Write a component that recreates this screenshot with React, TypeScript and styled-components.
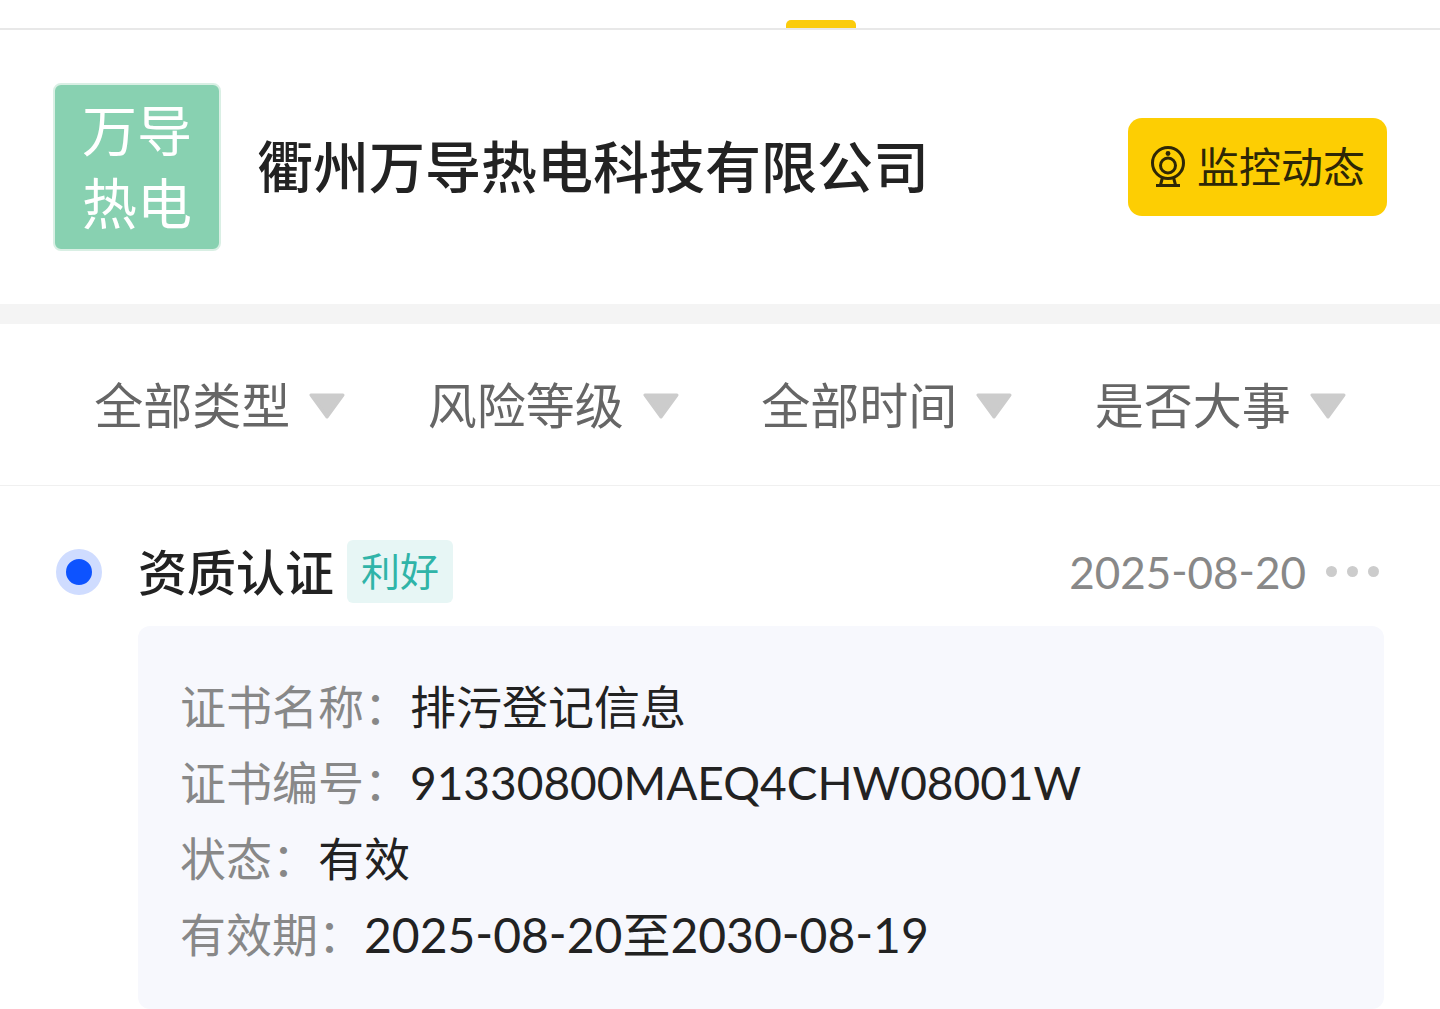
import React from "react";
import styled, { createGlobalStyle } from "styled-components";

const GlobalStyle = createGlobalStyle`
  *, *::before, *::after { box-sizing: border-box; }
  body {
    margin: 0;
    background: #fff;
    color: #222;
    font-family: Lato, "Noto Sans CJK SC", sans-serif;
  }
  h1, h2, dl, dd, dt { margin: 0; font-weight: 400; }
  button, select { font-family: inherit; border: 0; padding: 0; background: none; color: inherit; cursor: pointer; }
`;

const TabStrip = styled.nav`
  display: grid;
  grid-template-columns: 31fr 70px 23fr;
  align-items: end;
  height: 30px;
  border-bottom: 2px solid #e8e8e8;
`;

const TabIndicator = styled.span`
  grid-column: 2;
  height: 8px;
  border-radius: 5px 5px 0 0;
  background: #fbcc0c;
`;

const CompanyHeader = styled.header`
  display: flex;
  align-items: center;
  gap: 36px;
  padding: 53px;
  border-bottom: 20px solid #f4f4f4;
`;

const CompanyLogo = styled.div`
  display: grid;
  place-content: center;
  flex: none;
  width: 168px;
  height: 168px;
  border: 2px solid #d9efe4;
  border-radius: 8px;
  background: #88d1b1;
  color: #fff;
  font-size: 55px;
  line-height: 73px;
`;

const CompanyName = styled.h1`
  flex: 1;
  font-size: 56px;
  font-weight: 500;
  line-height: 80px;
`;

const MonitorButton = styled.button`
  display: flex;
  align-items: center;
  justify-content: center;
  gap: 11px;
  flex: none;
  height: 98px;
  padding: 0 22px;
  border-radius: 14px;
  background: #fdce03;
  color: #2e2706;
  font-size: 42px;
  line-height: 60px;
`;

const FilterBar = styled.form`
  display: grid;
  grid-template-columns: repeat(4, 1fr);
  padding: 0 53px;
  height: 162px;
  align-items: center;
  border-bottom: 1px solid #f0f0f0;
`;

const FilterField = styled.label`
  display: grid;
  align-items: center;
  justify-self: center;
`;

const FilterSelect = styled.select`
  grid-area: 1 / 1;
  appearance: none;
  height: 72px;
  padding-right: 54px;
  outline: none;
  color: #666;
  font-size: 49px;
`;

const FilterArrow = styled.svg`
  grid-area: 1 / 1;
  justify-self: end;
  pointer-events: none;
`;

const Timeline = styled.main`
  padding: 49px 56px 0;
`;

const Entry = styled.article`
  display: grid;
  grid-template-columns: 46px 1fr;
  column-gap: 36px;
  row-gap: 18px;
`;

const EntryMarker = styled.span`
  align-self: center;
  width: 46px;
  height: 46px;
  border: 10px solid #cfdcff;
  border-radius: 50%;
  background: #0d53ff;
`;

const EntryHead = styled.div`
  display: flex;
  align-items: center;
  height: 73px;
`;

const EntryTitle = styled.h2`
  font-size: 49px;
  font-weight: 500;
  line-height: 72px;
`;

const Tag = styled.span`
  margin-left: 13px;
  padding: 0 14px;
  border-radius: 6px;
  background: #e7f6f5;
  color: #30b4a8;
  font-size: 39px;
  line-height: 63px;
`;

const EntryDate = styled.time`
  margin-left: auto;
  color: #888;
  font-size: 44px;
  line-height: 72px;
  font-feature-settings: "case";
`;

const MoreButton = styled.button`
  display: flex;
  gap: 10px;
  margin-left: 20px;
  padding: 20px 5px 20px 0;
`;

const MoreDot = styled.span`
  width: 11px;
  height: 11px;
  border-radius: 50%;
  background: #ccc;
`;

const DetailCard = styled.dl`
  grid-column: 2;
  padding: 43px 42px 36px;
  border-radius: 12px;
  background: #f7f8fd;
`;

const DetailRow = styled.div`
  display: flex;
  align-items: center;
  height: 76px;
  font-size: 46px;
  line-height: 76px;
`;

const DetailLabel = styled.dt`
  color: #888;
`;

const DetailValue = styled.dd<{ $date?: boolean }>`
  font-size: ${(p) => (p.$date ? 48 : 46)}px;
  font-feature-settings: "case";
`;

const filters = ["全部类型", "风险等级", "全部时间", "是否大事"];

const details = [
  { label: "证书名称", value: "排污登记信息" },
  { label: "证书编号", value: "91330800MAEQ4CHW08001W" },
  { label: "状态", value: "有效" },
  { label: "有效期", value: "2025-08-20至2030-08-19", date: true },
];

function CameraIcon() {
  return (
    <svg width="36" height="42" viewBox="0 0 36 42" fill="none" stroke="currentColor" strokeWidth="3" aria-hidden="true">
      <circle cx="18" cy="17" r="15.5" />
      <circle cx="18" cy="19.5" r="7.5" />
      <circle cx="18" cy="7.5" r="2.4" fill="currentColor" stroke="none" />
      <path d="M12.5 31.5 10.5 39M23.5 31.5 25.5 39M6 39.5H30" />
    </svg>
  );
}

export default function App() {
  return (
    <>
      <GlobalStyle />
      <TabStrip>
        <TabIndicator />
      </TabStrip>
      <CompanyHeader>
        <CompanyLogo>
          <span>万导</span>
          <span>热电</span>
        </CompanyLogo>
        <CompanyName>衢州万导热电科技有限公司</CompanyName>
        <MonitorButton type="button">
          <CameraIcon />
          监控动态
        </MonitorButton>
      </CompanyHeader>
      <FilterBar>
        {filters.map((name) => (
          <FilterField key={name}>
            <FilterSelect aria-label={name}>
              <option>{name}</option>
            </FilterSelect>
            <FilterArrow width="36" height="28" viewBox="0 0 36 28" aria-hidden="true">
              <path d="M2 4H34L18 26Z" fill="#ccc" stroke="#ccc" strokeWidth="3" strokeLinejoin="round" />
            </FilterArrow>
          </FilterField>
        ))}
      </FilterBar>
      <Timeline>
        <Entry>
          <EntryMarker />
          <EntryHead>
            <EntryTitle>资质认证</EntryTitle>
            <Tag>利好</Tag>
            <EntryDate dateTime="2025-08-20">2025-08-20</EntryDate>
            <MoreButton type="button" aria-label="更多">
              <MoreDot />
              <MoreDot />
              <MoreDot />
            </MoreButton>
          </EntryHead>
          <DetailCard>
            {details.map((d) => (
              <DetailRow key={d.label}>
                <DetailLabel>{d.label}：</DetailLabel>
                <DetailValue $date={d.date}>{d.value}</DetailValue>
              </DetailRow>
            ))}
          </DetailCard>
        </Entry>
      </Timeline>
    </>
  );
}
